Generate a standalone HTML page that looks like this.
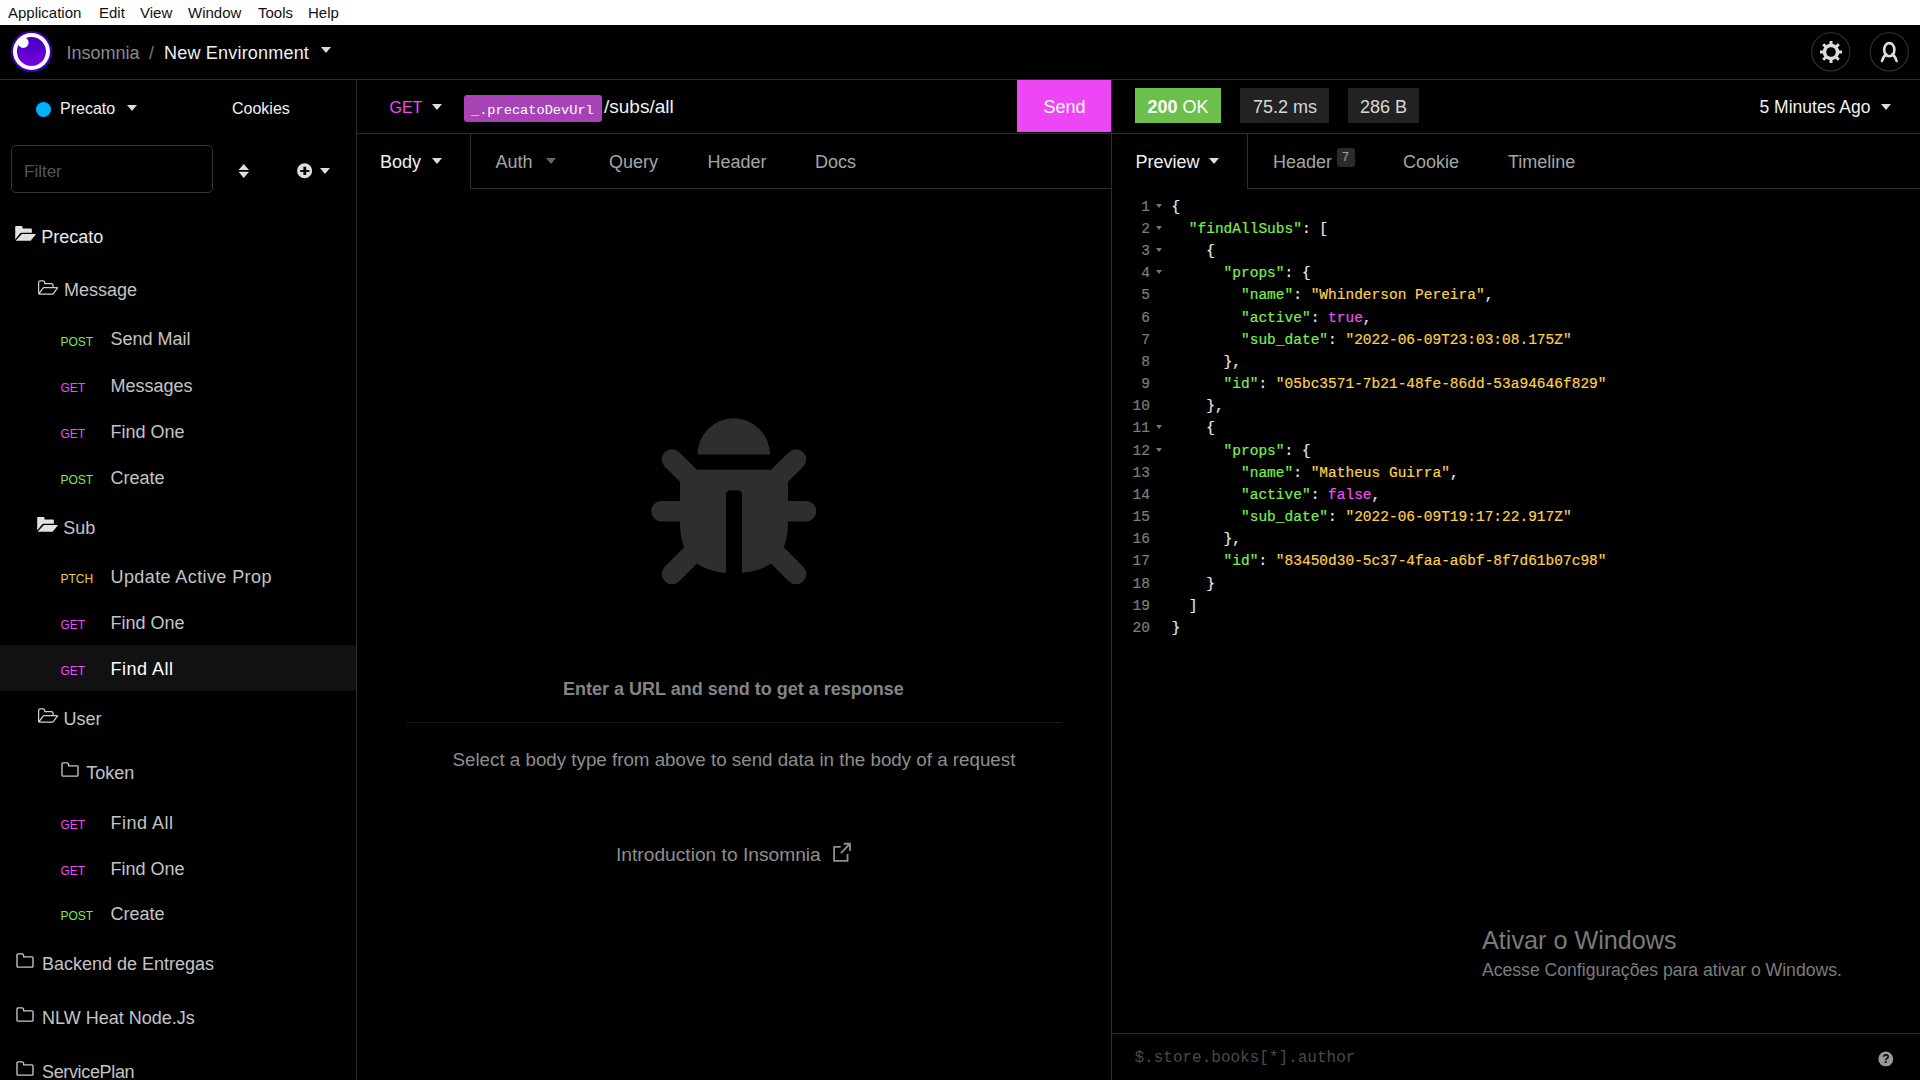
<!DOCTYPE html>
<html><head><meta charset="utf-8">
<style>
*{margin:0;padding:0;box-sizing:border-box}
html,body{width:1920px;height:1080px;overflow:hidden;background:#000;font-family:"Liberation Sans",sans-serif;}
.a{position:absolute;white-space:nowrap;line-height:1}
.mono{font-family:"Liberation Mono",monospace}
.car{position:absolute;width:0;height:0;border-left:5.5px solid transparent;border-right:5.5px solid transparent;border-top:6.5px solid #ddd}
.hl{position:absolute;background:#2e2e2e}
.s18{font-size:18px}
.gray{color:#a5a5a5}
.wh{color:#f0f0f0}
.post{color:#7ee84c}
.get{color:#ee4cf6}
.ptch{color:#f2cc50}
.m{font-size:12px}
</style></head><body>
<!-- menubar -->
<div style="position:absolute;left:0;top:0;width:1920px;height:25px;background:#fff"></div>
<div class="a" style="left:8px;top:5px;font-size:15px;color:#111">Application</div>
<div class="a" style="left:99px;top:5px;font-size:15px;color:#111">Edit</div>
<div class="a" style="left:140px;top:5px;font-size:15px;color:#111">View</div>
<div class="a" style="left:188px;top:5px;font-size:15px;color:#111">Window</div>
<div class="a" style="left:258px;top:5px;font-size:15px;color:#111">Tools</div>
<div class="a" style="left:308px;top:5px;font-size:15px;color:#111">Help</div>

<!-- header -->
<div class="hl" style="left:0;top:79px;width:1920px;height:1px"></div>
<svg class="a" style="left:11px;top:31px" width="42" height="42" viewBox="0 0 42 42">
<defs><linearGradient id="lg" x1="0" y1="0" x2="0" y2="1"><stop offset="0" stop-color="#4000bf"/><stop offset="1" stop-color="#7a00e0"/></linearGradient></defs>
<circle cx="20.45" cy="20.5" r="20.5" fill="#3d00c0"/>
<circle cx="20.45" cy="20.5" r="18.5" fill="#fff"/>
<circle cx="20.45" cy="20.5" r="14.5" fill="url(#lg)"/>
<circle cx="12.3" cy="11.6" r="5.3" fill="#fff"/>
</svg>
<div class="a s18" style="left:66.5px;top:44px;color:#8a8a8a">Insomnia</div>
<div class="a s18" style="left:149px;top:44px;color:#777">/</div>
<div class="a s18 wh" style="left:164px;top:44px;letter-spacing:0.2px">New Environment</div>
<div class="car" style="left:321px;top:47px"></div>
<svg class="a" style="left:1810px;top:31px" width="42" height="42" viewBox="0 0 42 42">
<circle cx="20.75" cy="20.9" r="19.1" fill="none" stroke="#333" stroke-width="1.1"/>
<g transform="translate(21,21)" fill="#ddd">
<rect x="-1.5" y="-11" width="3" height="22"/>
<rect x="-11" y="-1.5" width="22" height="3"/>
<rect x="-1.5" y="-11" width="3" height="22" transform="rotate(45)"/>
<rect x="-1.5" y="-11" width="3" height="22" transform="rotate(-45)"/>
<circle r="8.3"/>
<circle r="4.8" fill="#000"/>
</g>
</svg>
<svg class="a" style="left:1869px;top:31px" width="42" height="42" viewBox="0 0 42 42">
<circle cx="20.3" cy="20.9" r="19.1" fill="none" stroke="#333" stroke-width="1.1"/>
<ellipse cx="20.3" cy="18.7" rx="5.1" ry="6.6" fill="none" stroke="#ddd" stroke-width="2.6"/>
<path d="M13 30 Q14.5 25 17.3 23.5 M27.6 30 Q26.1 25 23.3 23.5" fill="none" stroke="#ddd" stroke-width="2.6" stroke-linecap="round"/>
</svg>

<!-- sidebar -->
<div class="hl" style="left:356px;top:80px;width:1px;height:1000px"></div>
<div class="a" style="left:36px;top:102px;width:15px;height:15px;border-radius:50%;background:#00b0ff"></div>
<div class="a wh" style="left:60px;top:101px;font-size:16px">Precato</div>
<div class="car" style="left:127px;top:105px"></div>
<div class="a wh" style="left:232px;top:101px;font-size:16px">Cookies</div>
<div class="a" style="left:11px;top:145px;width:202px;height:48px;border:1px solid #333;border-radius:5px"></div>
<div class="a" style="left:24px;top:163px;font-size:17px;color:#555">Filter</div>
<svg class="a" style="left:238px;top:163px" width="12" height="16" viewBox="0 0 12 16">
<path d="M5.75 0.9 L11 7 L0.5 7 Z M0.5 8.7 L11 8.7 L5.75 14.9 Z" fill="#ddd"/>
</svg>
<svg class="a" style="left:296px;top:162px" width="17" height="17" viewBox="0 0 17 17">
<circle cx="8.6" cy="8.75" r="7.5" fill="#ddd"/>
<rect x="4.2" y="8" width="9.2" height="1.9" fill="#000"/>
<rect x="7.4" y="4.7" width="2.8" height="8.3" fill="#000"/>
</svg>
<div class="car" style="left:320px;top:168px;border-left-width:5.2px;border-right-width:5.2px;border-top-width:6px"></div>

<!-- tree -->
<div class="a" style="left:0;top:645px;width:356px;height:46px;background:#111"></div>
<!--TREE-->
<svg class="a" style="left:15px;top:226px" width="22" height="16" viewBox="0 0 22 16"><path d="M0.2 0.9 Q0.2 0 1.1 0 L6.6 0 Q7.5 0 7.5 0.9 L7.5 2.6 L16 2.6 Q16.9 2.6 16.9 3.5 L16.9 6.8 L6.6 6.8 Q5.6 6.8 5 7.6 L0.2 13.4 Z M6.9 8 L20.6 8 Q21.1 8 20.8 8.4 L15.6 14.8 L0.6 14.8 Z" fill="#e2e2e2"/></svg>
<div class="a s18" style="left:41.2px;top:228px;color:#e8e8e8;letter-spacing:0px">Precato</div>
<svg class="a" style="left:37px;top:280px" width="22" height="16" viewBox="0 0 22 16"><path d="M1.6 12.8 L1.6 2.5 Q1.6 0.75 3.3 0.75 L6 0.75 Q7.7 0.75 7.7 2.4 L7.7 3.5 L14.3 3.5 Q16.05 3.5 16.05 5.2 L16.05 7 M2.1 13.6 L5.8 8.3 Q6.3 7.55 7.2 7.55 L20 7.55 Q20.8 7.55 20.3 8.2 L16.4 13.6 Q16.05 14.1 15.3 14.1 L2.8 14.1 Q1.6 14.1 1.6 12.8" fill="none" stroke="#cfcfcf" stroke-width="1.25" stroke-linejoin="round"/></svg>
<div class="a s18" style="left:64.1px;top:281px;color:#c4c4c4;letter-spacing:0px">Message</div>
<div class="a m post" style="left:60.5px;top:336px">POST</div>
<div class="a s18" style="left:110.5px;top:330px;color:#c4c4c4;letter-spacing:0px">Send Mail</div>
<div class="a m get" style="left:60.5px;top:382px">GET</div>
<div class="a s18" style="left:110.5px;top:377px;color:#c4c4c4;letter-spacing:0px">Messages</div>
<div class="a m get" style="left:60.5px;top:428px">GET</div>
<div class="a s18" style="left:110.5px;top:423px;color:#c4c4c4;letter-spacing:0px">Find One</div>
<div class="a m post" style="left:60.5px;top:474px">POST</div>
<div class="a s18" style="left:110.5px;top:469px;color:#c4c4c4;letter-spacing:0px">Create</div>
<svg class="a" style="left:37px;top:517px" width="22" height="16" viewBox="0 0 22 16"><path d="M0.2 0.9 Q0.2 0 1.1 0 L6.6 0 Q7.5 0 7.5 0.9 L7.5 2.6 L16 2.6 Q16.9 2.6 16.9 3.5 L16.9 6.8 L6.6 6.8 Q5.6 6.8 5 7.6 L0.2 13.4 Z M6.9 8 L20.6 8 Q21.1 8 20.8 8.4 L15.6 14.8 L0.6 14.8 Z" fill="#e2e2e2"/></svg>
<div class="a s18" style="left:63.3px;top:519px;color:#c4c4c4;letter-spacing:0px">Sub</div>
<div class="a m ptch" style="left:60.5px;top:573px">PTCH</div>
<div class="a s18" style="left:110.5px;top:568px;color:#c4c4c4;letter-spacing:0.4px">Update Active Prop</div>
<div class="a m get" style="left:60.5px;top:619px">GET</div>
<div class="a s18" style="left:110.5px;top:614px;color:#c4c4c4;letter-spacing:0px">Find One</div>
<div class="a m get" style="left:60.5px;top:665px">GET</div>
<div class="a s18" style="left:110.5px;top:660px;color:#fff;letter-spacing:0.5px">Find All</div>
<svg class="a" style="left:37px;top:708px" width="22" height="16" viewBox="0 0 22 16"><path d="M1.6 12.8 L1.6 2.5 Q1.6 0.75 3.3 0.75 L6 0.75 Q7.7 0.75 7.7 2.4 L7.7 3.5 L14.3 3.5 Q16.05 3.5 16.05 5.2 L16.05 7 M2.1 13.6 L5.8 8.3 Q6.3 7.55 7.2 7.55 L20 7.55 Q20.8 7.55 20.3 8.2 L16.4 13.6 Q16.05 14.1 15.3 14.1 L2.8 14.1 Q1.6 14.1 1.6 12.8" fill="none" stroke="#cfcfcf" stroke-width="1.25" stroke-linejoin="round"/></svg>
<div class="a s18" style="left:63.5px;top:710px;color:#c4c4c4;letter-spacing:0px">User</div>
<svg class="a" style="left:61px;top:762px" width="19" height="16" viewBox="0 0 19 16"><path d="M1.9 0.9 L6.2 0.9 Q7.3 0.9 7.5 2.0 L7.7 3.9 L16.1 3.9 Q17.0 3.9 17.0 4.8 L17.0 13.2 Q17.0 14.1 16.1 14.1 L1.9 14.1 Q1.0 14.1 1.0 13.2 L1.0 1.8 Q1.0 0.9 1.9 0.9 Z" fill="none" stroke="#c8c8c8" stroke-width="1.35" stroke-linejoin="round"/></svg>
<div class="a s18" style="left:86.25px;top:764px;color:#c4c4c4;letter-spacing:0px">Token</div>
<div class="a m get" style="left:60.5px;top:819px">GET</div>
<div class="a s18" style="left:110.5px;top:814px;color:#c4c4c4;letter-spacing:0.5px">Find All</div>
<div class="a m get" style="left:60.5px;top:865px">GET</div>
<div class="a s18" style="left:110.5px;top:860px;color:#c4c4c4;letter-spacing:0px">Find One</div>
<div class="a m post" style="left:60.5px;top:910px">POST</div>
<div class="a s18" style="left:110.5px;top:905px;color:#c4c4c4;letter-spacing:0px">Create</div>
<svg class="a" style="left:16px;top:953px" width="19" height="16" viewBox="0 0 19 16"><path d="M1.9 0.9 L6.2 0.9 Q7.3 0.9 7.5 2.0 L7.7 3.9 L16.1 3.9 Q17.0 3.9 17.0 4.8 L17.0 13.2 Q17.0 14.1 16.1 14.1 L1.9 14.1 Q1.0 14.1 1.0 13.2 L1.0 1.8 Q1.0 0.9 1.9 0.9 Z" fill="none" stroke="#c8c8c8" stroke-width="1.35" stroke-linejoin="round"/></svg>
<div class="a s18" style="left:42px;top:955px;color:#c4c4c4;letter-spacing:0px">Backend de Entregas</div>
<svg class="a" style="left:16px;top:1007px" width="19" height="16" viewBox="0 0 19 16"><path d="M1.9 0.9 L6.2 0.9 Q7.3 0.9 7.5 2.0 L7.7 3.9 L16.1 3.9 Q17.0 3.9 17.0 4.8 L17.0 13.2 Q17.0 14.1 16.1 14.1 L1.9 14.1 Q1.0 14.1 1.0 13.2 L1.0 1.8 Q1.0 0.9 1.9 0.9 Z" fill="none" stroke="#c8c8c8" stroke-width="1.35" stroke-linejoin="round"/></svg>
<div class="a s18" style="left:42px;top:1009px;color:#c4c4c4;letter-spacing:0px">NLW Heat Node.Js</div>
<svg class="a" style="left:16px;top:1061px" width="19" height="16" viewBox="0 0 19 16"><path d="M1.9 0.9 L6.2 0.9 Q7.3 0.9 7.5 2.0 L7.7 3.9 L16.1 3.9 Q17.0 3.9 17.0 4.8 L17.0 13.2 Q17.0 14.1 16.1 14.1 L1.9 14.1 Q1.0 14.1 1.0 13.2 L1.0 1.8 Q1.0 0.9 1.9 0.9 Z" fill="none" stroke="#c8c8c8" stroke-width="1.35" stroke-linejoin="round"/></svg>
<div class="a s18" style="left:42px;top:1063px;color:#c4c4c4;letter-spacing:-0.35px">ServicePlan</div>
<!--/TREE-->

<!-- request pane -->
<div class="hl" style="left:357px;top:133px;width:1563px;height:1px"></div>
<div class="a get" style="left:389.5px;top:100px;font-size:16px">GET</div>
<div class="car" style="left:431.5px;top:104px"></div>
<div class="a" style="left:464px;top:95px;width:138px;height:27px;border-radius:3px;background:#a843b5"></div>
<div class="a mono" style="left:471px;top:104px;font-size:13.65px;color:#fff">_.precatoDevUrl</div>
<div class="a wh" style="left:604px;top:97px;font-size:19px">/subs/all</div>
<div class="a" style="left:1017px;top:80px;width:94px;height:52px;background:#ed46f5"></div>
<div class="a" style="left:1043.5px;top:98px;font-size:18px;color:#fff">Send</div>

<div class="hl" style="left:470px;top:133px;width:1px;height:55px"></div>
<div class="hl" style="left:470px;top:188px;width:641px;height:1px"></div>
<div class="a s18 wh" style="left:380px;top:153px">Body</div>
<div class="car" style="left:432px;top:158px"></div>
<div class="a s18 gray" style="left:495.5px;top:153px">Auth</div>
<div class="car" style="left:545.5px;top:158px;border-top-color:#666"></div>
<div class="a s18 gray" style="left:609px;top:153px">Query</div>
<div class="a s18 gray" style="left:707.5px;top:153px">Header</div>
<div class="a s18 gray" style="left:815px;top:153px">Docs</div>

<svg class="a" style="left:651px;top:418px" width="166" height="167" viewBox="0 0 166 167">
<g fill="#2e2e2e" stroke="#2e2e2e" stroke-width="20.5" stroke-linecap="round">
<line x1="10.4" y1="93.3" x2="82.7" y2="93.3"/>
<line x1="155.0" y1="93.3" x2="82.7" y2="93.3"/>
<line x1="21" y1="41.5" x2="60" y2="80"/>
<line x1="145" y1="41.5" x2="106" y2="80"/>
<line x1="21" y1="156" x2="60" y2="117"/>
<line x1="145" y1="156" x2="106" y2="117"/>
</g>
<path d="M46.5 36.6 A36.2 36.2 0 0 1 119 36.6 Z" fill="#2e2e2e"/>
<path d="M29 51.8 L137 51.8 L137 105 Q137 155 83 155.3 Q29 155 29 105 Z" fill="#2e2e2e"/>
<path d="M75 160 L75 77 Q75 72.3 79.7 72.3 L86.9 72.3 Q91 72.3 91 77 L91 160 Z" fill="#000"/>
</svg>
<div class="a" style="left:563px;top:680px;font-size:18px;font-weight:bold;color:#848484">Enter a URL and send to get a response</div>
<div class="a" style="left:406px;top:722px;width:656px;height:1px;background:#1a1a1a"></div>
<div class="a" style="left:452.5px;top:751px;font-size:18.75px;color:#8e8e8e">Select a body type from above to send data in the body of a request</div>
<div class="a" style="left:616px;top:845px;font-size:19.2px;color:#8e8e8e">Introduction to Insomnia</div>
<svg class="a" style="left:832px;top:842px" width="21" height="21" viewBox="0 0 21 21">
<path d="M8.7 4.8 L2.1 4.8 L2.1 18.9 L15.55 18.9 L15.55 12.1" fill="none" stroke="#8e8e8e" stroke-width="1.8"/>
<path d="M11.7 1.75 L18 1.75 L18 8.9 M18 1.75 L8.9 11.1" fill="none" stroke="#8e8e8e" stroke-width="1.8"/>
</svg>

<!-- response pane -->
<div class="hl" style="left:1111px;top:80px;width:1px;height:1000px"></div>
<div class="a" style="left:1135px;top:88px;width:86px;height:35px;background:#6cbf4b"></div>
<div class="a" style="left:1147.5px;top:98px;font-size:18px;color:#fff"><b>200</b> OK</div>
<div class="a" style="left:1240px;top:88px;width:89px;height:35px;background:#222"></div>
<div class="a" style="left:1253px;top:98px;font-size:18px;color:#d8d8d8">75.2 ms</div>
<div class="a" style="left:1348px;top:88px;width:71px;height:35px;background:#222"></div>
<div class="a" style="left:1360px;top:98px;font-size:18px;color:#d8d8d8">286 B</div>
<div class="a wh" style="left:1759.5px;top:99px;font-size:17.5px">5 Minutes Ago</div>
<div class="car" style="left:1880.5px;top:104px"></div>

<div class="hl" style="left:1247px;top:133px;width:1px;height:55px"></div>
<div class="hl" style="left:1247px;top:188px;width:673px;height:1px"></div>
<div class="a s18 wh" style="left:1135.5px;top:153px">Preview</div>
<div class="car" style="left:1209px;top:158px"></div>
<div class="a s18 gray" style="left:1273px;top:153px">Header</div>
<div class="a" style="left:1337px;top:148px;width:18px;height:19px;border-radius:3px;background:#2b2b2b"></div>
<div class="a" style="left:1342px;top:151px;font-size:12.5px;color:#a0a0a0">7</div>
<div class="a s18 gray" style="left:1403px;top:153px">Cookie</div>
<div class="a s18 gray" style="left:1508px;top:153px">Timeline</div>

<!--CODE-->
<div class="a mono" style="left:0;top:0;font-size:14.5px;-webkit-text-stroke:0.2px">
<div class="a" style="left:1100px;top:200.0px;width:50px;text-align:right;color:#7e7e7e">1</div>
<div class="car" style="left:1156px;top:203.8px;border-left-width:3.2px;border-right-width:3.2px;border-top-width:4.5px;border-top-color:#777"></div>
<div class="a" style="left:1171.4px;top:200.0px"><span style="color:#e8e8e8">{</span></div>
<div class="a" style="left:1100px;top:222.0px;width:50px;text-align:right;color:#7e7e7e">2</div>
<div class="car" style="left:1156px;top:226.0px;border-left-width:3.2px;border-right-width:3.2px;border-top-width:4.5px;border-top-color:#777"></div>
<div class="a" style="left:1171.4px;top:222.0px"><span style="color:#e8e8e8">&nbsp;&nbsp;</span><span style="color:#7ded52">"findAllSubs"</span><span style="color:#e8e8e8">:&nbsp;[</span></div>
<div class="a" style="left:1100px;top:244.0px;width:50px;text-align:right;color:#7e7e7e">3</div>
<div class="car" style="left:1156px;top:248.1px;border-left-width:3.2px;border-right-width:3.2px;border-top-width:4.5px;border-top-color:#777"></div>
<div class="a" style="left:1171.4px;top:244.0px"><span style="color:#e8e8e8">&nbsp;&nbsp;&nbsp;&nbsp;{</span></div>
<div class="a" style="left:1100px;top:266.0px;width:50px;text-align:right;color:#7e7e7e">4</div>
<div class="car" style="left:1156px;top:270.3px;border-left-width:3.2px;border-right-width:3.2px;border-top-width:4.5px;border-top-color:#777"></div>
<div class="a" style="left:1171.4px;top:266.0px"><span style="color:#e8e8e8">&nbsp;&nbsp;&nbsp;&nbsp;&nbsp;&nbsp;</span><span style="color:#7ded52">"props"</span><span style="color:#e8e8e8">:&nbsp;{</span></div>
<div class="a" style="left:1100px;top:288.0px;width:50px;text-align:right;color:#7e7e7e">5</div>
<div class="a" style="left:1171.4px;top:288.0px"><span style="color:#e8e8e8">&nbsp;&nbsp;&nbsp;&nbsp;&nbsp;&nbsp;&nbsp;&nbsp;</span><span style="color:#7ded52">"name"</span><span style="color:#e8e8e8">:&nbsp;</span><span style="color:#fdd04c">"Whinderson&nbsp;Pereira"</span><span style="color:#e8e8e8">,</span></div>
<div class="a" style="left:1100px;top:311.0px;width:50px;text-align:right;color:#7e7e7e">6</div>
<div class="a" style="left:1171.4px;top:311.0px"><span style="color:#e8e8e8">&nbsp;&nbsp;&nbsp;&nbsp;&nbsp;&nbsp;&nbsp;&nbsp;</span><span style="color:#7ded52">"active"</span><span style="color:#e8e8e8">:&nbsp;</span><span style="color:#f04ef8">true</span><span style="color:#e8e8e8">,</span></div>
<div class="a" style="left:1100px;top:333.0px;width:50px;text-align:right;color:#7e7e7e">7</div>
<div class="a" style="left:1171.4px;top:333.0px"><span style="color:#e8e8e8">&nbsp;&nbsp;&nbsp;&nbsp;&nbsp;&nbsp;&nbsp;&nbsp;</span><span style="color:#7ded52">"sub_date"</span><span style="color:#e8e8e8">:&nbsp;</span><span style="color:#fdd04c">"2022-06-09T23:03:08.175Z"</span></div>
<div class="a" style="left:1100px;top:355.0px;width:50px;text-align:right;color:#7e7e7e">8</div>
<div class="a" style="left:1171.4px;top:355.0px"><span style="color:#e8e8e8">&nbsp;&nbsp;&nbsp;&nbsp;&nbsp;&nbsp;},</span></div>
<div class="a" style="left:1100px;top:377.0px;width:50px;text-align:right;color:#7e7e7e">9</div>
<div class="a" style="left:1171.4px;top:377.0px"><span style="color:#e8e8e8">&nbsp;&nbsp;&nbsp;&nbsp;&nbsp;&nbsp;</span><span style="color:#7ded52">"id"</span><span style="color:#e8e8e8">:&nbsp;</span><span style="color:#fdd04c">"05bc3571-7b21-48fe-86dd-53a94646f829"</span></div>
<div class="a" style="left:1100px;top:399.0px;width:50px;text-align:right;color:#7e7e7e">10</div>
<div class="a" style="left:1171.4px;top:399.0px"><span style="color:#e8e8e8">&nbsp;&nbsp;&nbsp;&nbsp;},</span></div>
<div class="a" style="left:1100px;top:421.0px;width:50px;text-align:right;color:#7e7e7e">11</div>
<div class="car" style="left:1156px;top:425.4px;border-left-width:3.2px;border-right-width:3.2px;border-top-width:4.5px;border-top-color:#777"></div>
<div class="a" style="left:1171.4px;top:421.0px"><span style="color:#e8e8e8">&nbsp;&nbsp;&nbsp;&nbsp;{</span></div>
<div class="a" style="left:1100px;top:444.0px;width:50px;text-align:right;color:#7e7e7e">12</div>
<div class="car" style="left:1156px;top:447.6px;border-left-width:3.2px;border-right-width:3.2px;border-top-width:4.5px;border-top-color:#777"></div>
<div class="a" style="left:1171.4px;top:444.0px"><span style="color:#e8e8e8">&nbsp;&nbsp;&nbsp;&nbsp;&nbsp;&nbsp;</span><span style="color:#7ded52">"props"</span><span style="color:#e8e8e8">:&nbsp;{</span></div>
<div class="a" style="left:1100px;top:466.0px;width:50px;text-align:right;color:#7e7e7e">13</div>
<div class="a" style="left:1171.4px;top:466.0px"><span style="color:#e8e8e8">&nbsp;&nbsp;&nbsp;&nbsp;&nbsp;&nbsp;&nbsp;&nbsp;</span><span style="color:#7ded52">"name"</span><span style="color:#e8e8e8">:&nbsp;</span><span style="color:#fdd04c">"Matheus&nbsp;Guirra"</span><span style="color:#e8e8e8">,</span></div>
<div class="a" style="left:1100px;top:488.0px;width:50px;text-align:right;color:#7e7e7e">14</div>
<div class="a" style="left:1171.4px;top:488.0px"><span style="color:#e8e8e8">&nbsp;&nbsp;&nbsp;&nbsp;&nbsp;&nbsp;&nbsp;&nbsp;</span><span style="color:#7ded52">"active"</span><span style="color:#e8e8e8">:&nbsp;</span><span style="color:#f04ef8">false</span><span style="color:#e8e8e8">,</span></div>
<div class="a" style="left:1100px;top:510.0px;width:50px;text-align:right;color:#7e7e7e">15</div>
<div class="a" style="left:1171.4px;top:510.0px"><span style="color:#e8e8e8">&nbsp;&nbsp;&nbsp;&nbsp;&nbsp;&nbsp;&nbsp;&nbsp;</span><span style="color:#7ded52">"sub_date"</span><span style="color:#e8e8e8">:&nbsp;</span><span style="color:#fdd04c">"2022-06-09T19:17:22.917Z"</span></div>
<div class="a" style="left:1100px;top:532.0px;width:50px;text-align:right;color:#7e7e7e">16</div>
<div class="a" style="left:1171.4px;top:532.0px"><span style="color:#e8e8e8">&nbsp;&nbsp;&nbsp;&nbsp;&nbsp;&nbsp;},</span></div>
<div class="a" style="left:1100px;top:554.0px;width:50px;text-align:right;color:#7e7e7e">17</div>
<div class="a" style="left:1171.4px;top:554.0px"><span style="color:#e8e8e8">&nbsp;&nbsp;&nbsp;&nbsp;&nbsp;&nbsp;</span><span style="color:#7ded52">"id"</span><span style="color:#e8e8e8">:&nbsp;</span><span style="color:#fdd04c">"83450d30-5c37-4faa-a6bf-8f7d61b07c98"</span></div>
<div class="a" style="left:1100px;top:577.0px;width:50px;text-align:right;color:#7e7e7e">18</div>
<div class="a" style="left:1171.4px;top:577.0px"><span style="color:#e8e8e8">&nbsp;&nbsp;&nbsp;&nbsp;}</span></div>
<div class="a" style="left:1100px;top:599.0px;width:50px;text-align:right;color:#7e7e7e">19</div>
<div class="a" style="left:1171.4px;top:599.0px"><span style="color:#e8e8e8">&nbsp;&nbsp;]</span></div>
<div class="a" style="left:1100px;top:621.0px;width:50px;text-align:right;color:#7e7e7e">20</div>
<div class="a" style="left:1171.4px;top:621.0px"><span style="color:#e8e8e8">}</span></div>
</div>
<!--/CODE-->

<div class="a" style="left:1482px;top:928px;font-size:25.2px;color:#7a7a7a">Ativar o Windows</div>
<div class="a" style="left:1482px;top:962px;font-size:17.6px;color:#7c7c7c">Acesse Configurações para ativar o Windows.</div>

<div class="hl" style="left:1112px;top:1033px;width:808px;height:1px"></div>
<div class="a mono" style="left:1134.5px;top:1050px;font-size:16px;color:#4a4a4a">$.store.books[*].author</div>
<svg class="a" style="left:1877px;top:1050px" width="18" height="18" viewBox="0 0 18 18">
<circle cx="8.8" cy="8.9" r="7.4" fill="#9a9a9a"/>
<text x="8.8" y="13.4" text-anchor="middle" font-family="Liberation Sans" font-weight="bold" font-size="12" fill="#000">?</text>
</svg>
</body></html>
